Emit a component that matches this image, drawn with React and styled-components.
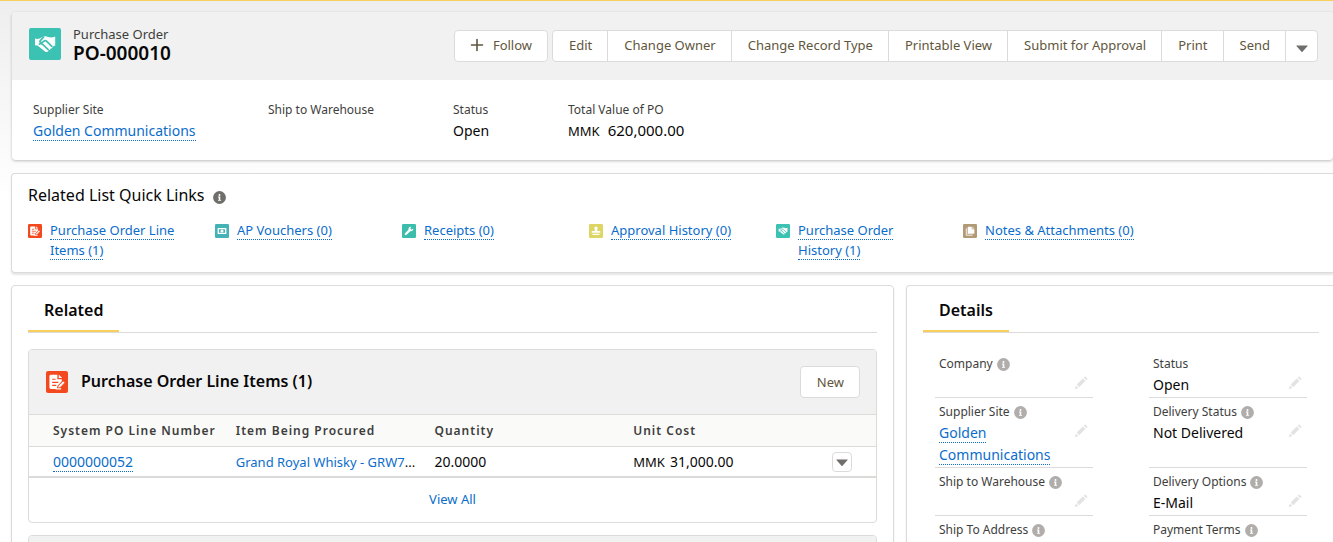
import React from 'react';
import styled, { createGlobalStyle, css } from 'styled-components';

const GlobalStyle = createGlobalStyle`
  *, *::before, *::after { box-sizing: border-box; }
  body {
    margin: 0;
    background: #fff;
    color: #080707;
    font-family: "Noto Sans", "Open Sans", sans-serif;
    font-size: 13px;
    line-height: 20px;
  }
  h1, h2, h3, p, dl, dd, dt, ul { margin: 0; padding: 0; font: inherit; }
`;

const line = '#dddbda';

const Page = styled.main`
  height: 100vh;
  overflow: hidden;
  padding: 11px 0 0 11px;
  border-top: 1px solid #f8cf5d;
  background: linear-gradient(#eeeeee, #ffffff 200px);
  display: flex;
  flex-direction: column;
  gap: 12px;
`;

const Card = styled.section`
  flex: none;
  background: #fff;
  border: 1px solid ${line};
  border-right: 0;
  border-radius: 4px 0 0 4px;
  box-shadow: 0 2px 2px rgba(0, 0, 0, 0.1);
  overflow: hidden;
`;

const RecordCard = styled(Card)`
  margin: 0 0 1px 1px;
  border: 0;
  border-radius: 4px;
  box-shadow: 0 1px 3px rgba(0, 0, 0, 0.25);
`;

const RecordBar = styled.header`
  display: flex;
  align-items: flex-start;
  justify-content: space-between;
  min-height: 68px;
  padding: 16px 15px 0 17px;
  background: #f1f1f1;
`;

const RecordTitle = styled.div`
  display: flex;
  gap: 12px;
`;

const RecordKind = styled.p`
  line-height: 16px;
  margin-top: -2px;
  color: #3e3e3c;
`;

const RecordName = styled.h1`
  font-size: 19px;
  line-height: 22px;
  font-weight: 600;
  color: #080707;
`;

const Actions = styled.div`
  display: flex;
  gap: 4px;
  margin-top: 2px;
`;

const Button = styled.button`
  display: inline-flex;
  align-items: center;
  justify-content: center;
  gap: 9px;
  height: 32px;
  padding: 0 15px 0 16px;
  border: 1px solid ${line};
  border-radius: 4px;
  background: #fff;
  color: #5f563c;
  font: inherit;
  white-space: nowrap;
`;

const ButtonGroup = styled.div`
  display: flex;
  ${Button} {
    border-radius: 0;
    margin-left: -1px;
    padding-bottom: 2px;
  }
  ${Button}:first-child {
    border-radius: 4px 0 0 4px;
    margin-left: 0;
  }
  ${Button}:last-child {
    border-radius: 0 4px 4px 0;
    padding: 3px 9px 0 10px;
  }
`;

const FollowButton = styled(Button)`
  padding: 0 15px 2px;
`;

const Highlights = styled.dl`
  display: flex;
  padding: 20px 20px 18px 21px;
`;

const Highlight = styled.div`
  flex: none;
  width: ${(p) => p.$width}px;
`;

const Label = styled.dt`
  display: flex;
  align-items: center;
  gap: 4px;
  font-size: 12px;
  line-height: 20px;
  color: #3e3e3c;
`;

const Value = styled.dd`
  font-size: 14px;
  line-height: 22px;
`;

const Currency = styled.span`
  font-size: 13px;
  line-height: 16px;
  margin-right: ${(p) => p.$gap || 5}px;
`;

const Amount = styled.span`
  font-size: ${(p) => p.$size || 14}px;
  line-height: 16px;
`;

const Link = styled.a`
  color: #0b6dcb;
  text-decoration: none;
  ${(p) =>
    !p.$plain &&
    css`
      border-bottom: 1px dotted #0b6dcb;
    `}
`;

const QuickTitle = styled.h2`
  display: flex;
  align-items: center;
  gap: 8px;
  padding: 10px 16px 0;
  font-size: 16px;
  line-height: 22px;
  svg { margin-top: 4px; }
`;

const QuickGrid = styled.ul`
  display: grid;
  grid-template-columns: repeat(auto-fill, 187px);
  padding: 14px 0 12px 16px;
  list-style: none;
`;

const QuickItem = styled.li`
  display: flex;
  align-items: flex-start;
  gap: 8px;
  padding-right: 14px;
  svg { margin-top: 4px; }
`;

const Columns = styled.div`
  flex: none;
  display: grid;
  grid-template-columns: minmax(0, 883fr) minmax(0, 427fr);
  align-items: start;
  gap: 12px;
`;

const Panel = styled(Card)`
  padding: 0 ${(p) => (p.$closed ? 16 : 14)}px 16px 16px;
  ${(p) =>
    p.$closed &&
    css`
      border-right: 1px solid ${line};
      border-radius: 4px;
    `}
`;

const Tabs = styled.div`
  display: flex;
  border-bottom: 1px solid ${line};
`;

const Tab = styled.h2`
  padding: 13px 16px 9px;
  border-bottom: 2px solid #f8cf5d;
  font-size: 16px;
  line-height: 22px;
  font-weight: 600;
`;

const List = styled.article`
  margin-top: ${(p) => (p.$next ? 12 : 16)}px;
  border: 1px solid ${line};
  border-radius: 4px;
  overflow: hidden;
`;

const ListHead = styled.header`
  display: flex;
  align-items: center;
  gap: 13px;
  height: 64px;
  padding: 0 16px 0 17px;
  background: #f1f1f1;
  ${Button} { margin-left: auto; }
`;

const ListTitle = styled.h3`
  font-size: 16px;
  line-height: 22px;
  padding-bottom: 2px;
  font-weight: 600;
`;

const Table = styled.table`
  width: 100%;
  table-layout: fixed;
  border-collapse: separate;
  border-spacing: 0;
  border-top: 1px solid ${line};
  border-bottom: 2px solid ${line};
  th, td {
    padding: 0 8px;
    text-align: left;
    white-space: nowrap;
  }
  th:first-child, td:first-child { padding-left: 24px; }
`;

const Th = styled.th`
  height: 32px;
  border-bottom: 1px solid ${line};
  background: #fafaf9;
  color: #3e3e3c;
  font-size: 12px;
  font-weight: 600;
  letter-spacing: 1px;
  &:last-child { width: 52px; }
`;

const Td = styled.td`
  height: 29px;
`;

const MenuButton = styled.button`
  display: flex;
  align-items: center;
  justify-content: center;
  width: 20px;
  height: 20px;
  padding: 0;
  border: 1px solid ${line};
  border-radius: 4px;
  background: #fff;
`;

const ListFoot = styled.footer`
  padding: 11px 0 13px;
  text-align: center;
`;

const Fields = styled.dl`
  display: grid;
  grid-template-columns: 1fr 1fr;
  column-gap: 56px;
  padding: 17px 12px 0;
`;

const Field = styled.div`
  min-height: 48px;
  padding: 4px 5px 1px 4px;
  border-bottom: 1px solid ${line};
`;

const FieldValue = styled(Value)`
  display: flex;
  justify-content: space-between;
  align-items: flex-start;
  min-height: 22px;
`;

const EditButton = styled.button`
  display: flex;
  margin: 2px 0 0;
  padding: 0;
  border: 0;
  background: none;
`;

const Svg = styled.svg`
  display: block;
  flex: none;
`;

const Caret = () => (
  <Svg width="12" height="12" viewBox="0 0 12 12" aria-hidden="true">
    <path d="M0.8 3.4h10.4c.5 0 .6.4.4.7L6.5 9.700c-.3.3-.7.3-1 0L.4 4.100C.2 3.800.3 3.400.8 3.400z" fill="#706e6b" />
  </Svg>
);

const Info = ({ color = '#b0adab' }) => (
  <Svg width="13" height="13" viewBox="0 0 13 13" aria-hidden="true">
    <circle cx="6.5" cy="6.5" r="6.4" fill={color} />
    <circle cx="6.5" cy="3.9" r="1" fill="#fff" />
    <path d="M5 5.600h2.300v3.300h.8v.9H5v-.9h.7V6.500H5z" fill="#fff" />
  </Svg>
);

const Pencil = () => (
  <Svg width="14" height="14" viewBox="0 0 14 14" aria-hidden="true">
    <path d="M2.600 8.600l6.200-6.100 2.600 2.600-6.200 6.100zM9.700 1.700l.8-.8c.4-.4.9-.4 1.300 0l1.300 1.300c.4.4.4.9 0 1.300l-.8.8zM1.900 9.500l2.500 2.500-2.900 1c-.4.1-.7-.1-.6-.5z" fill="#e4e3e2" />
  </Svg>
);

const Tile = ({ size, color, children }) => (
  <Svg width={size} height={size} viewBox="0 0 32 32" aria-hidden="true">
    <rect width="32" height="32" rx={size > 30 ? 2 : 3} fill={color} />
    {children}
  </Svg>
);

const Handshake = ({ size }) => (
  <Tile size={size} color="#3cc2b3">
    <path
      d="M6 10.500c1.700.6 3.200.7 4.800 0 1.700-.8 3.300-2.300 5.200-2.300 2.200 0 4 1.300 6 1.300 1.400 0 2.700-.3 4.200-1v9.300c-1.200 0-2 .4-2.600 1.100-.3 1-1 1.500-2 1.500-.2 1-.9 1.600-1.900 1.600-.3 1.800-2 2.700-3.400 1.700L9.500 18.200c-1-.8-2.200-1-3.500-.8z"
      fill="#fff"
    />
    <g fill="none" stroke="#3cc2b3" strokeWidth="1.700" strokeLinecap="round" strokeLinejoin="round">
      <path d="M14.500 9.200L11.300 12.600c-1 1.300.4 2.600 1.700 1.900l2.700-1.700c.6-.3 1.300-.2 1.800.3l5.300 5.300" />
      <path d="M10.300 16.100c1.300-.8 2.400-.6 3.400.3l5.500 5.200" />
    </g>
  </Tile>
);

const OrderLine = ({ size }) => (
  <Tile size={size} color="#f4491f">
    <path d="M8 5.500h8.500V12H23v3l-6 6-1.500 5H7c-1.200 0-2-.8-2-2V7.500c0-1.200.8-2 3-2z" fill="#fff" />
    <path d="M18.500 5l5 5h-5z" fill="#fff" />
    <path d="M9 12h5M9 16.500h9M9 21h6" stroke="#f4491f" strokeWidth="1.800" />
    <path d="M18 21.500l7-7 2.500 2.500-7 7-3.500 1z" fill="#fff" stroke="#f4491f" strokeWidth="1" />
    <path d="M14 26h8" stroke="#fff" strokeWidth="2" />
  </Tile>
);

const Voucher = () => (
  <Tile size={14} color="#44b3b5">
    <path fillRule="evenodd" d="M6 9h20v14H6zM9 12v8h14v-8z" fill="#fff" />
    <circle cx="16" cy="16" r="3.500" fill="#fff" />
  </Tile>
);

const Wrench = () => (
  <Tile size={14} color="#3cbdab">
    <path d="M25.500 10.500l-3.800 2.700-2.800-2.700 2.300-4c-3.700-.7-7.200 2.200-6.400 6.500L7 21.200c-2.500 2.600 1 5.900 3.600 3.400l8.200-8c4.200 1 7.600-2.200 6.700-6.100z" fill="#fff" />
  </Tile>
);

const Stamp = () => (
  <Tile size={14} color="#ddd665">
    <path d="M16 5.500c3 0 4.500 2.500 3.500 5-.8 2-1 3.500-.5 5.500h5c1.500 0 2 1 2 2v2H6v-2c0-1 .5-2 2-2h5c.5-2 .3-3.500-.5-5.500-1-2.500.5-5 3.500-5zM8 22h16v3H8z" fill="#fff" />
  </Tile>
);

const Files = () => (
  <Tile size={14} color="#b29a77">
    <path d="M12 6h8v6h6v9c0 .8-.5 1.300-1.300 1.300H12c-.8 0-1.300-.5-1.300-1.300V7.300C10.700 6.500 11.200 6 12 6zM21.500 6L26 10.500h-4.500z" fill="#fff" />
    <path d="M7.500 10v15.500H22" fill="none" stroke="#fff" strokeWidth="2" />
  </Tile>
);

const Plus = () => (
  <Svg width="14" height="14" viewBox="0 0 14 14" aria-hidden="true">
    <path d="M7 1.500v11M1.500 7h11" stroke="#5f563c" strokeWidth="1.600" strokeLinecap="round" />
  </Svg>
);

const actions = ['Edit', 'Change Owner', 'Change Record Type', 'Printable View', 'Submit for Approval', 'Print', 'Send'];

const quickLinks = [
  [<OrderLine size={14} />, 'Purchase Order Line Items\u00a0(1)'],
  [<Voucher />, 'AP Vouchers\u00a0(0)'],
  [<Wrench />, 'Receipts\u00a0(0)'],
  [<Stamp />, 'Approval History\u00a0(0)'],
  [<Handshake size={14} />, 'Purchase Order History\u00a0(1)'],
  [<Files />, 'Notes & Attachments\u00a0(0)'],
];

const fields = [
  { label: 'Company', info: true },
  { label: 'Status', value: 'Open' },
  { label: 'Supplier Site', info: true, value: 'Golden Communications', link: true },
  { label: 'Delivery Status', info: true, value: 'Not Delivered' },
  { label: 'Ship to Warehouse', info: true },
  { label: 'Delivery Options', info: true, value: 'E-Mail' },
  { label: 'Ship To Address', info: true },
  { label: 'Payment Terms', info: true },
];

export default function App() {
  return (
    <>
      <GlobalStyle />
      <Page>
        <RecordCard>
          <RecordBar>
            <RecordTitle>
              <Handshake size={32} />
              <div>
                <RecordKind>Purchase Order</RecordKind>
                <RecordName>PO-000010</RecordName>
              </div>
            </RecordTitle>
            <Actions>
              <FollowButton type="button"><Plus />Follow</FollowButton>
              <ButtonGroup>
                {actions.map((a) => <Button type="button" key={a}>{a}</Button>)}
                <Button type="button" aria-label="More actions"><Caret /></Button>
              </ButtonGroup>
            </Actions>
          </RecordBar>
          <Highlights>
            <Highlight $width={235}>
              <Label>Supplier Site</Label>
              <Value><Link href="#supplier">Golden Communications</Link></Value>
            </Highlight>
            <Highlight $width={185}>
              <Label>Ship to Warehouse</Label>
              <Value />
            </Highlight>
            <Highlight $width={115}>
              <Label>Status</Label>
              <Value>Open</Value>
            </Highlight>
            <Highlight $width={160}>
              <Label>Total Value of PO</Label>
              <Value><Currency $gap={8}>MMK</Currency><Amount $size={15}>620,000.00</Amount></Value>
            </Highlight>
          </Highlights>
        </RecordCard>

        <Card>
          <QuickTitle>Related List Quick Links <Info color="#706e6b" /></QuickTitle>
          <QuickGrid>
            {quickLinks.map(([icon, text]) => (
              <QuickItem key={text}>
                {icon}
                <span><Link href="#list">{text}</Link></span>
              </QuickItem>
            ))}
          </QuickGrid>
        </Card>

        <Columns>
          <Panel $closed>
            <Tabs><Tab>Related</Tab></Tabs>
            <List>
              <ListHead>
                <OrderLine size={22} />
                <ListTitle>Purchase Order Line Items (1)</ListTitle>
                <Button type="button">New</Button>
              </ListHead>
              <Table>
                <thead>
                  <tr>
                    <Th>System PO Line Number</Th>
                    <Th>Item Being Procured</Th>
                    <Th>Quantity</Th>
                    <Th>Unit Cost</Th>
                    <Th aria-label="Row actions" />
                  </tr>
                </thead>
                <tbody>
                  <tr>
                    <Td><Link href="#line"><Amount>0000000052</Amount></Link></Td>
                    <Td><Link $plain href="#item">Grand Royal Whisky - GRW7</Link>...</Td>
                    <Td><Amount>20.0000</Amount></Td>
                    <Td><Currency>MMK</Currency><Amount>31,000.00</Amount></Td>
                    <Td><MenuButton type="button" aria-label="Row menu"><Caret /></MenuButton></Td>
                  </tr>
                </tbody>
              </Table>
              <ListFoot><Link $plain href="#all">View All</Link></ListFoot>
            </List>
            <List $next><ListHead /></List>
          </Panel>

          <Panel>
            <Tabs><Tab>Details</Tab></Tabs>
            <Fields>
              {fields.map((f) => (
                <Field key={f.label}>
                  <Label>{f.label}{f.info && <Info />}</Label>
                  <FieldValue>
                    <span>{f.link ? <Link href="#supplier">{f.value}</Link> : f.value}</span>
                    <EditButton type="button" aria-label={`Edit ${f.label}`}><Pencil /></EditButton>
                  </FieldValue>
                </Field>
              ))}
            </Fields>
          </Panel>
        </Columns>
      </Page>
    </>
  );
}
